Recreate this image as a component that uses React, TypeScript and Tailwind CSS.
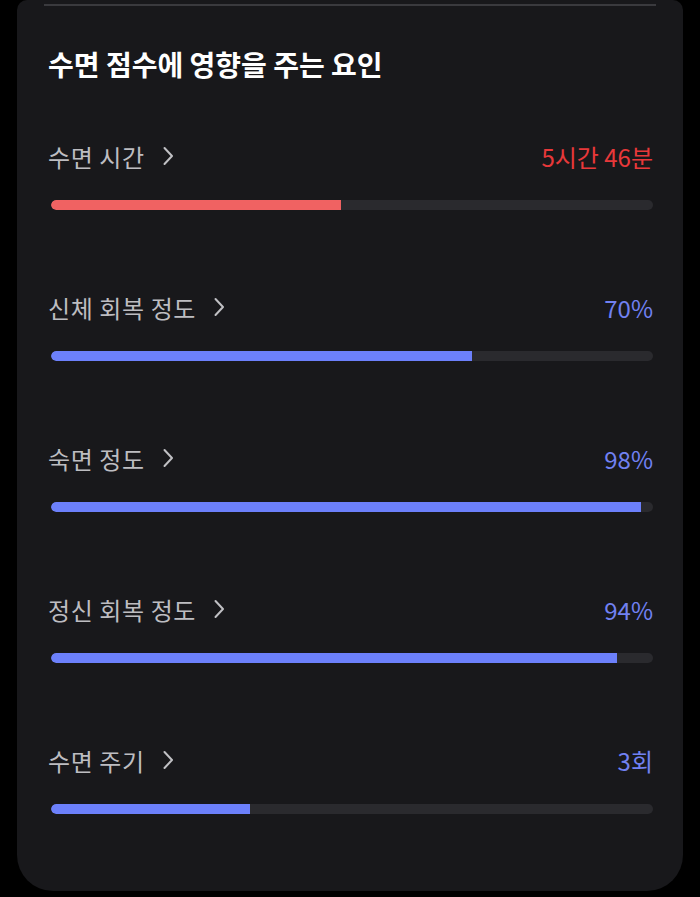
import React from "react";

type Factor = { label: string; value: string; pct: number; tone: "red" | "blue" };

const factors: Factor[] = [
  { label: "수면 시간", value: "5시간 46분", pct: 48.2, tone: "red" },
  { label: "신체 회복 정도", value: "70%", pct: 70, tone: "blue" },
  { label: "숙면 정도", value: "98%", pct: 98, tone: "blue" },
  { label: "정신 회복 정도", value: "94%", pct: 94, tone: "blue" },
  { label: "수면 주기", value: "3회", pct: 33, tone: "blue" },
];

function Chevron() {
  return (
    <svg width="12" height="22" viewBox="0 0 12 22" fill="none" className="ml-[17px] mt-[-3px]">
      <path d="M2.5 3 L10 11 L2.5 19" stroke="#c0c0c4" strokeWidth="2" strokeLinecap="round" strokeLinejoin="round" />
    </svg>
  );
}

function FactorRow({ f }: { f: Factor }) {
  return (
    <div className="h-[151px] pt-[55px]">
      <div className="flex items-center justify-between h-[40px]">
        <div className="flex items-center text-[24px] text-[#bdbdc1] tracking-[0.6px]">
          <span>{f.label}</span>
          <Chevron />
        </div>
        <span className={f.tone === "red" ? "text-[24px] text-[#e8383a]" : "text-[24px] text-[#7181f2]"}>
          {f.value}
        </span>
      </div>
      <div className="mt-[23px] ml-[3px] h-[10px] rounded-full bg-[#2a2a2e] overflow-hidden">
        <div
          className={f.tone === "red" ? "h-full rounded-l-full bg-[#f06262]" : "h-full rounded-l-full bg-[#6c80fb]"}
          style={{ width: `${f.pct}%` }}
        />
      </div>
    </div>
  );
}

export default function App() {
  return (
    <div
      className="h-[897px] w-[700px] bg-black overflow-hidden"
      style={{ fontFamily: '"Noto Sans CJK KR", "Noto Sans", sans-serif' }}
    >
      <div className="mx-[17px] h-[891px] rounded-t-[10px] rounded-b-[36px] bg-[#18181b] pl-[31px] pr-[30px]">
        <div className="ml-[-4px] mr-[-3px] pt-[4px]">
          <div className="h-[2px] bg-[#3a3a3e]" />
        </div>
        <h1 className="mt-[40px] text-[28px] font-bold leading-[36px] text-white">수면 점수에 영향을 주는 요인</h1>
        <div>
          {factors.map((f) => (
            <FactorRow key={f.label} f={f} />
          ))}
        </div>
      </div>
    </div>
  );
}
